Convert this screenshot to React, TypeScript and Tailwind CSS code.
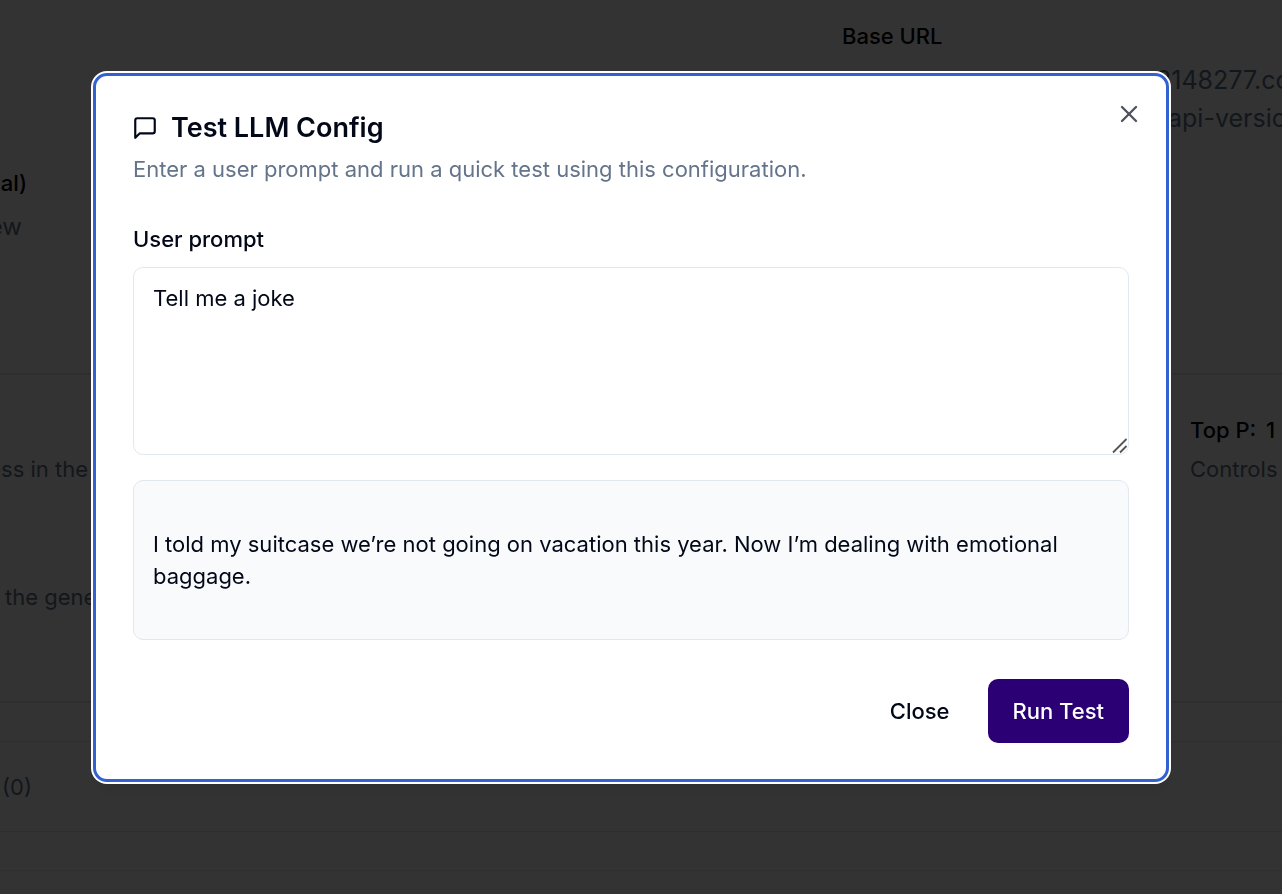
import React, { useState } from "react";
import { X } from "lucide-react";

const ConfigPage: React.FC = () => {
  return (
    <main className="min-h-screen overflow-hidden bg-white text-[22px] leading-8 font-medium text-black">
      <section className="grid grid-cols-[1fr_440px] h-[375px] border-b-2 border-gray-200">
        <div className="pt-[167px]">
          <p className="flex justify-end w-[27px]">al)</p>
          <p className="flex justify-end w-[22px] pt-3 text-2xl leading-8 font-normal text-slate-500">
            ew
          </p>
        </div>
        <div className="pt-5 overflow-hidden whitespace-nowrap">
          <p>Base URL</p>
          <div className="pt-[9px] pl-[314px] text-[25px] leading-[38px] font-normal text-slate-500">
            <p>2148277.co</p>
            <p className="pl-3">api-version</p>
          </div>
        </div>
      </section>

      <section className="grid grid-cols-[1fr_92px] h-[328px] border-b-2 border-gray-200 whitespace-nowrap">
        <div className="pt-[78px] font-normal text-slate-500">
          <p className="flex justify-end w-[88px]">ess in the</p>
          <p className="pl-[5px] pt-24">the generated</p>
        </div>
        <div className="pt-[39px]">
          <p>
            Top P: <span className="pl-1">1</span>
          </p>
          <p className="pt-[7px] font-normal text-slate-500">Controls</p>
        </div>
      </section>

      <div className="h-[39px] border-b border-gray-200" />
      <section className="h-[90px] pl-[2px] pt-[29px] border-b border-gray-200 font-normal text-slate-500">
        (0)
      </section>
      <div className="h-[39px] border-b border-gray-200" />
    </main>
  );
};

const MessageIcon: React.FC = () => (
  <svg
    aria-hidden="true"
    viewBox="0 0 24 24"
    className="w-[26px] h-[26px] -ml-px"
    fill="none"
    stroke="currentColor"
    strokeWidth="2"
    strokeLinecap="round"
    strokeLinejoin="round"
  >
    <path d="M21 15a2 2 0 0 1-2 2H7l-4 4V5a2 2 0 0 1 2-2h14a2 2 0 0 1 2 2z" />
  </svg>
);

const TestDialog: React.FC = () => {
  const [prompt, setPrompt] = useState("Tell me a joke");

  return (
    <div className="fixed inset-0 overflow-auto bg-black/80 pl-[93px] pr-[113px] pt-[73px]">
      <div
        role="dialog"
        aria-modal="true"
        aria-labelledby="dialog-title"
        className="relative rounded-[14px] border-[3px] border-[#3461d1] ring-2 ring-white bg-white px-[37px] pt-9 pb-9 shadow-lg text-[22px] leading-8 text-[#020817]"
      >
        <header>
          <h2
            id="dialog-title"
            className="flex items-center gap-[13px] text-[27px] leading-8 font-semibold"
          >
            <MessageIcon />
            Test LLM Config
          </h2>
          <p className="pt-[9px] text-[#64748b]">
            Enter a user prompt and run a quick test using this configuration.
          </p>
        </header>

        <div className="pt-[38px]">
          <label htmlFor="prompt" className="block font-medium">
            User prompt
          </label>
          <div className="relative mt-3">
            <textarea
              id="prompt"
              value={prompt}
              onChange={(e) => setPrompt(e.target.value)}
              className="block w-full h-[188px] resize-none rounded-[10px] border border-[#e2e8f0] bg-white px-[19px] py-[14px] leading-8 outline-none"
            />
            <svg
              aria-hidden="true"
              viewBox="0 0 16 16"
              className="pointer-events-none absolute right-[1px] bottom-[1px] w-4 h-4"
              fill="none"
              stroke="#555"
              strokeWidth="1.8"
            >
              <path d="M1 14.5 14.5 1M8 14.5l6.5-6.5" />
            </svg>
          </div>
        </div>

        <div className="mt-[25px] rounded-[10px] border border-[#e2e8f0] bg-[#f8fafc] px-[19px] py-[47px]">
          <p>
            I told my suitcase we’re not going on vacation this year. Now I’m
            dealing with emotional baggage.
          </p>
        </div>

        <footer className="flex justify-end gap-[13px] pt-[39px]">
          <button className="h-16 rounded-[10px] px-[25px] font-medium">
            Close
          </button>
          <button className="h-16 rounded-[10px] bg-[#2a0074] px-[25px] font-medium text-white">
            Run Test
          </button>
        </footer>

        <button
          aria-label="Close dialog"
          className="absolute right-[23px] top-6 text-[#4d525d]"
        >
          <X size={28} strokeWidth={2} />
        </button>
      </div>
    </div>
  );
};

const App: React.FC = () => {
  return (
    <div className="font-['Inter',sans-serif]">
      <ConfigPage />
      <TestDialog />
    </div>
  );
};

export default App;
